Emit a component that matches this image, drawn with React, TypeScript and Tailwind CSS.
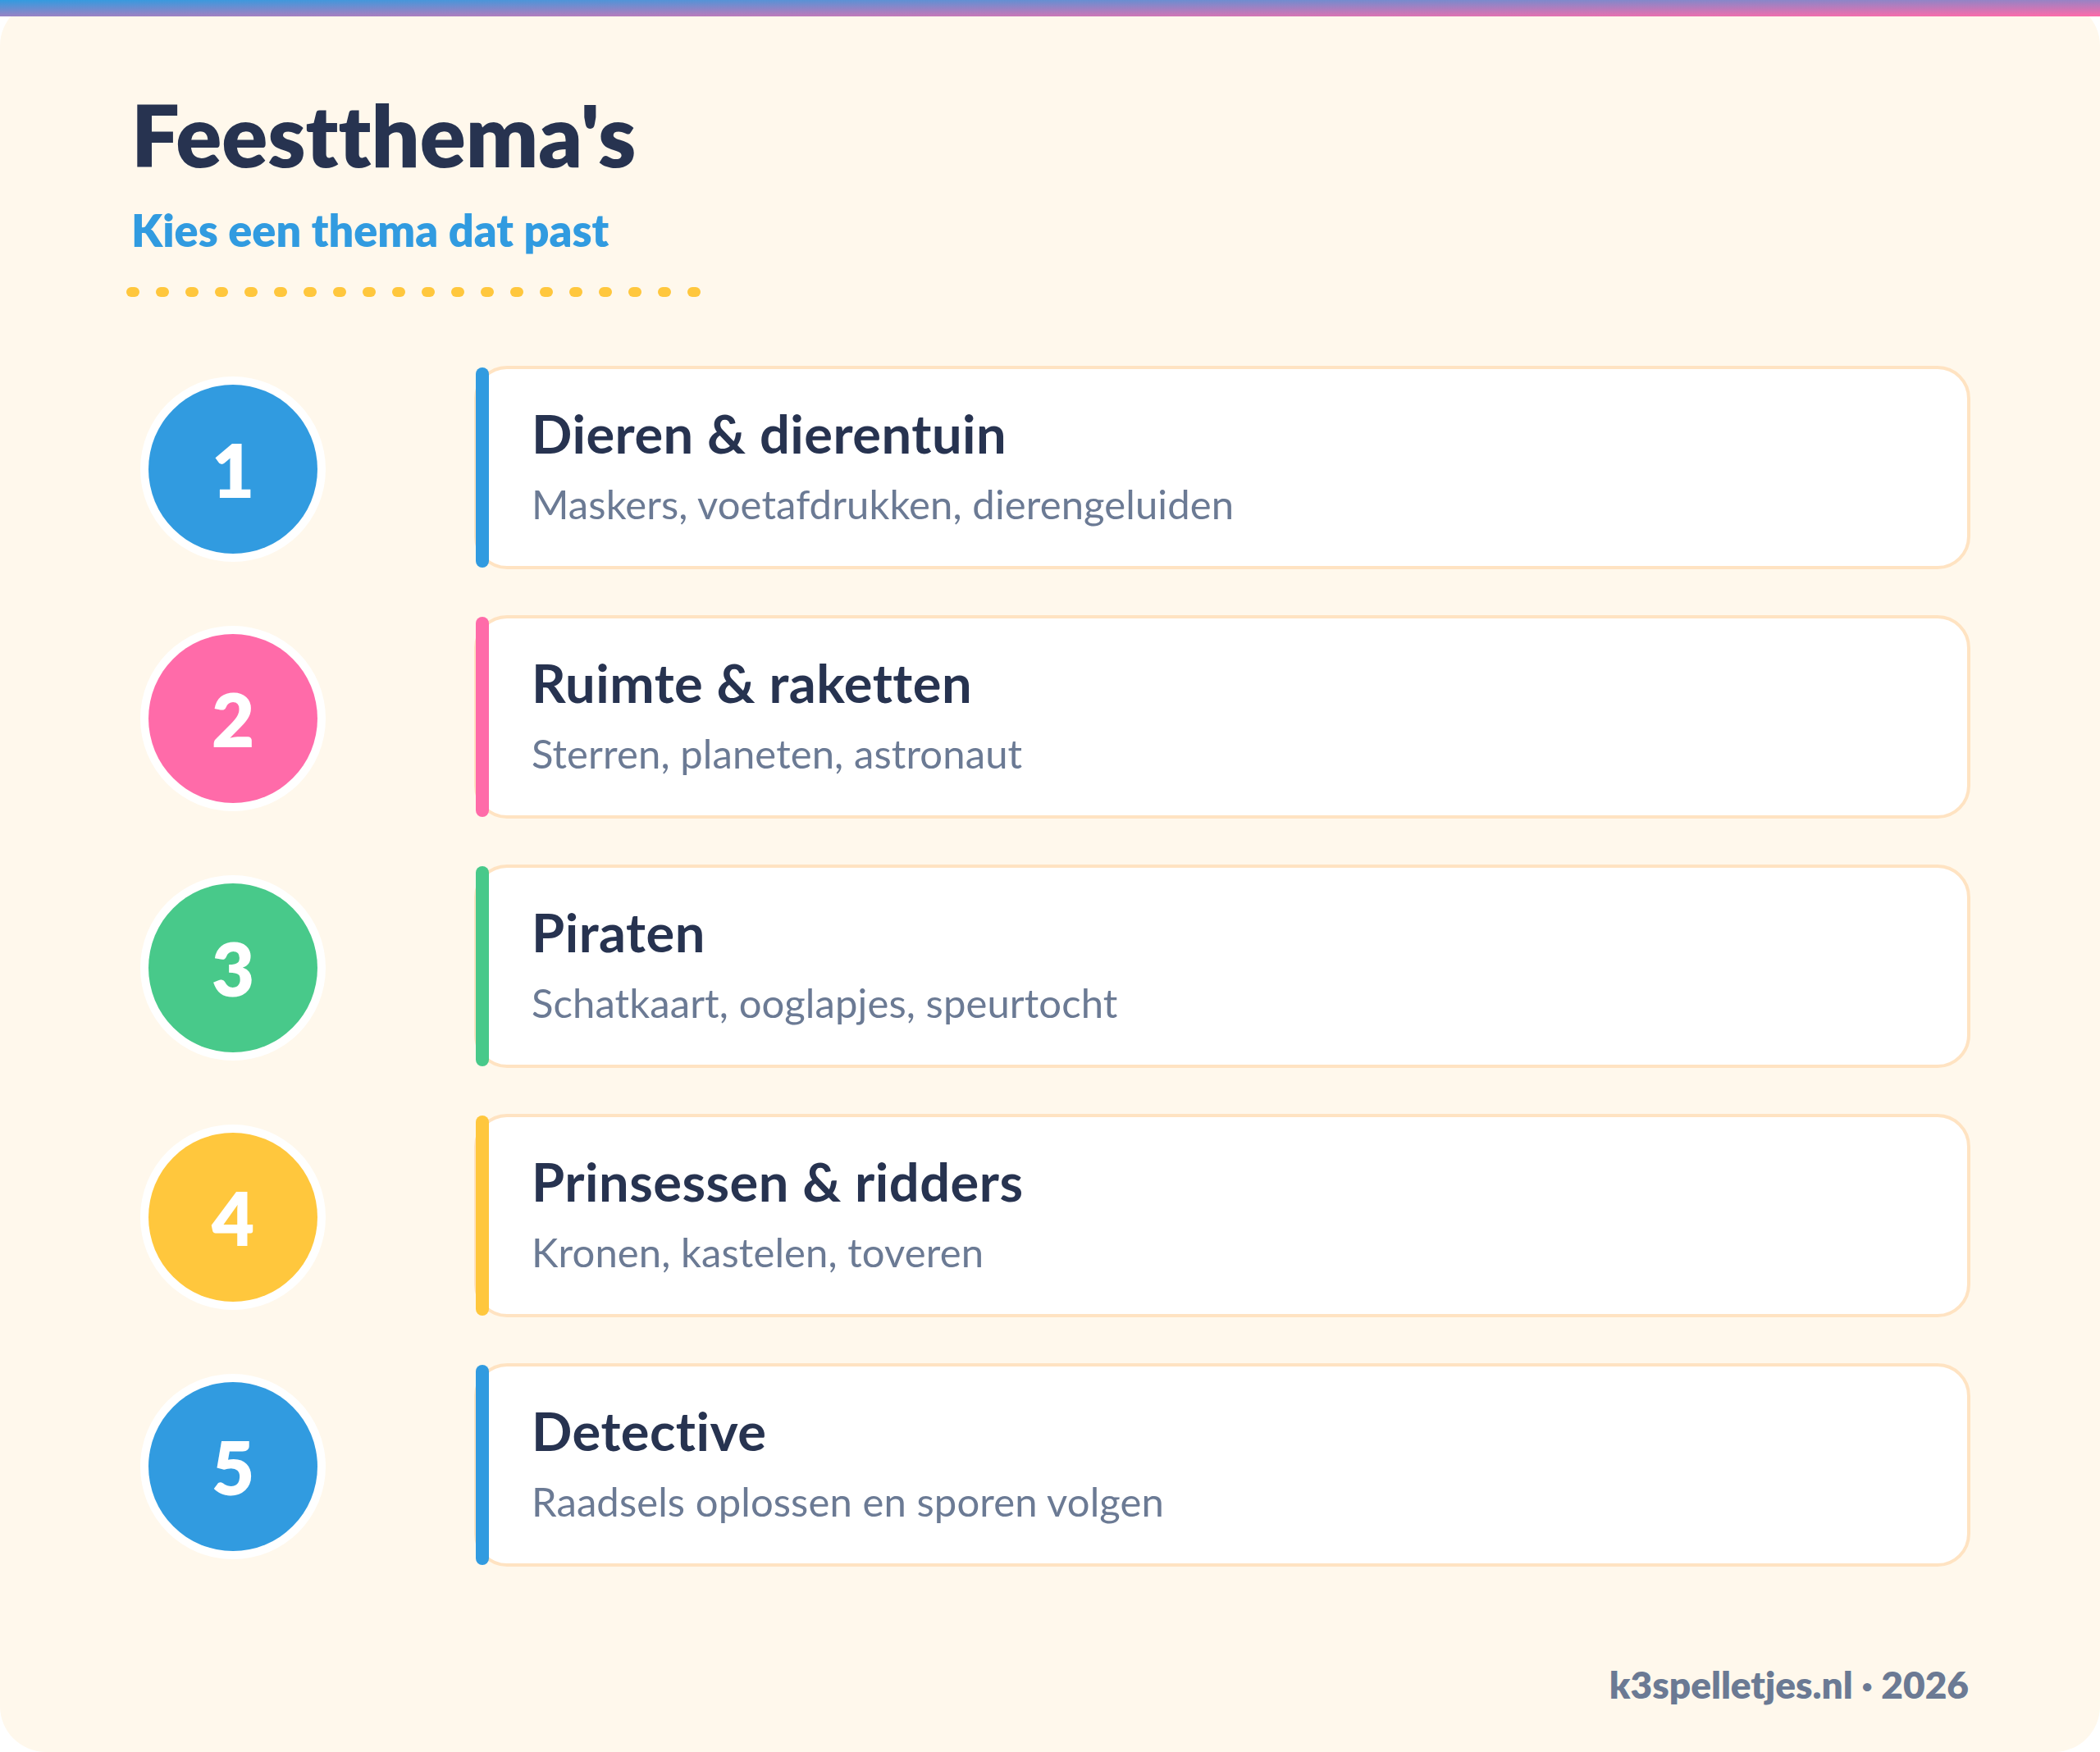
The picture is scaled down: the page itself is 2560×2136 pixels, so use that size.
const THEMES = [
  { nr: "1", title: "Dieren & dierentuin", desc: "Maskers, voetafdrukken, dierengeluiden", bg: "bg-[#319be0]" },
  { nr: "2", title: "Ruimte & raketten", desc: "Sterren, planeten, astronaut", bg: "bg-[#ff6ba9]" },
  { nr: "3", title: "Piraten", desc: "Schatkaart, ooglapjes, speurtocht", bg: "bg-[#48c98a]" },
  { nr: "4", title: "Prinsessen & ridders", desc: "Kronen, kastelen, toveren", bg: "bg-[#ffc73d]" },
  { nr: "5", title: "Detective", desc: "Raadsels oplossen en sporen volgen", bg: "bg-[#319be0]" },
];

const DOTS = Array.from({ length: 20 }, (_, i) => i);

const ThemeRow = ({ theme }: { theme: (typeof THEMES)[number] }) => (
  <div className="flex items-center">
    <div className="w-[418px] shrink-0 pl-[21px] pt-1">
      <div
        className={`flex h-[206px] w-[206px] items-center justify-center rounded-full text-[90px] leading-none font-extrabold text-white ring-[10px] ring-white ${theme.bg}`}
      >
        {theme.nr}
      </div>
    </div>
    <div className="relative mr-[-2px] h-[248px] flex-1 rounded-[40px] border-4 border-[#ffe3c2] bg-white pt-[38px] pl-[66px]">
      <div className={`absolute -top-0.5 -bottom-0.5 -left-0.5 w-4 rounded-lg ${theme.bg}`} />
      <h2 className="text-[65px] leading-[80px] font-bold tracking-[0.5px] text-[#273350]">{theme.title}</h2>
      <p className="mt-4 text-[49px] leading-[60px] tracking-[0.1px] text-[#6b7a94]">{theme.desc}</p>
    </div>
  </div>
);

export default function App() {
  return (
    <div className="relative h-[2136px] w-[2560px] bg-white font-['Lato','Liberation_Sans',sans-serif] [font-variant-ligatures:none]">
      <div className="absolute inset-x-0 top-0 h-5 bg-[linear-gradient(to_bottom_right,#319be0,#ff6ba9)]" />
      <div className="flex h-full flex-col rounded-[56px] bg-[#fff8ec] px-[160px] pt-[102px]">
        <h1 className="text-[104px] leading-[124px] font-extrabold text-[#273350]">Feestthema's</h1>
        <p className="mt-[23px] text-[54px] leading-[64px] font-extrabold text-[#319be0]">Kies een thema dat past</p>
        <div className="mt-[37px] ml-[-6px] flex gap-5">
          {DOTS.map((i) => (
            <div key={i} className="h-3 w-4 rounded-full bg-[#ffc73d]" />
          ))}
        </div>
        <div className="mt-[84px] flex flex-col gap-14">
          {THEMES.map((t) => (
            <ThemeRow key={t.nr} theme={t} />
          ))}
        </div>
        <p className="mt-[116px] text-right text-[46px] leading-[56px] font-extrabold text-[#6b7a94]">k3spelletjes.nl · 2026</p>
      </div>
    </div>
  );
}
